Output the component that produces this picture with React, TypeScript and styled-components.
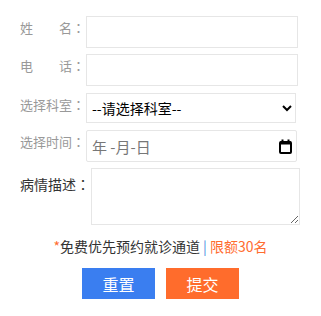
import styled, { createGlobalStyle } from "styled-components";

const GlobalStyle = createGlobalStyle`
	body {
		margin: 0;
		background: #fff;
		font-family: "Noto Sans CJK SC", "Noto Sans", sans-serif;
	}
`;

const Page = styled.form`
	width: 321px;
	padding-top: 16px;
`;

const Row = styled.div<{ $gap?: number }>`
	display: flex;
	align-items: flex-start;
	padding-left: 20px;
	margin-bottom: ${(props) => props.$gap ?? 6}px;
`;

const Label = styled.label`
	display: flex;
	justify-content: space-between;
	width: 65px;
	margin-right: 1px;
	font-size: 13px;
	line-height: 24px;
	color: #999;
	white-space: nowrap;
`;

const DarkLabel = styled.label`
	width: 70px;
	margin-right: 1px;
	font-size: 14px;
	line-height: 32px;
	color: #333;
	white-space: nowrap;
`;

// centred full-width colon, as in the reference font
const Colon = styled.span`
	font-family: "Noto Sans CJK JP", sans-serif;
`;

const TextInput = styled.input`
	box-sizing: border-box;
	width: 212px;
	height: 32px;
	border: 1px solid #e6e6e6;
	border-radius: 0;
	outline: none;
	padding: 0 6px;
	font-family: inherit;
	font-size: 14px;
`;

const Select = styled.select`
	box-sizing: border-box;
	width: 210px;
	height: 30px;
	border: 1px solid #e6e6e6;
	border-radius: 0;
	background: #fff;
	color: #000;
	padding: 0 1px;
	font-family: inherit;
	font-size: 14px;
	outline: none;
`;

const DateBox = styled.div`
	box-sizing: border-box;
	width: 211px;
	height: 32px;
	border: 1px solid #e6e6e6;
	border-radius: 2px;
	display: flex;
	align-items: center;
	justify-content: space-between;
	padding: 0 4px 0 5px;
	font-size: 15px;
	color: #777;
`;

const TextArea = styled.textarea`
	box-sizing: border-box;
	width: 209px;
	height: 57px;
	border: 1px solid #e6e6e6;
	border-radius: 0;
	outline: none;
	font-family: inherit;
	font-size: 14px;
`;

const Notice = styled.p`
	margin: 11px 0 0;
	text-align: center;
	font-size: 14px;
	line-height: 20px;
	color: #333;
`;

const Accent = styled.span<{ $color: string }>`
	color: ${(props) => props.$color};
`;

const Buttons = styled.div`
	display: flex;
	justify-content: center;
	gap: 11px;
	margin-top: 12px;
`;

const Button = styled.button<{ $bg: string }>`
	width: 73px;
	height: 31px;
	border: none;
	border-radius: 0;
	background: ${(props) => props.$bg};
	color: #fff;
	font-family: inherit;
	font-size: 16px;
	padding: 0;
	cursor: pointer;
`;

const FieldLabel = ({ text }: { text: string }) => {
	const parts = text.split(" ");
	return (
		<Label>
			{parts.map((part, i) => (
				<span key={i}>
					{part}
					{i === parts.length - 1 && <Colon>：</Colon>}
				</span>
			))}
		</Label>
	);
};

const CalendarIcon = () => (
	<svg width="13" height="15" viewBox="0 0 13 15">
		<rect x="1" y="3" width="11" height="11" rx="1" fill="none" stroke="#000" strokeWidth="2" />
		<rect x="1" y="2.5" width="11" height="3" fill="#000" />
		<rect x="2.5" y="0.5" width="2" height="3" fill="#000" />
		<rect x="8.5" y="0.5" width="2" height="3" fill="#000" />
	</svg>
);

const App = () => {
	return (
		<Page onSubmit={(e) => e.preventDefault()}>
			<GlobalStyle />
			<Row>
				<FieldLabel text="姓 名" />
				<TextInput type="text" />
			</Row>
			<Row $gap={7}>
				<FieldLabel text="电 话" />
				<TextInput type="tel" />
			</Row>
			<Row $gap={7}>
				<FieldLabel text="选择科室" />
				<Select defaultValue="">
					<option value="">--请选择科室--</option>
				</Select>
			</Row>
			<Row $gap={6}>
				<FieldLabel text="选择时间" />
				<DateBox>
					<span>年 -月-日</span>
					<CalendarIcon />
				</DateBox>
			</Row>
			<Row $gap={0}>
				<DarkLabel>
					病情描述<Colon>：</Colon>
				</DarkLabel>
				<TextArea />
			</Row>
			<Notice>
				<Accent $color="#ff6c2f">*</Accent>免费优先预约就诊通道 <Accent $color="#4a8fe0">|</Accent>{" "}
				<Accent $color="#ff6c2f">限额30名</Accent>
			</Notice>
			<Buttons>
				<Button type="reset" $bg="#3a7ef0">重置</Button>
				<Button type="submit" $bg="#ff6c2c">提交</Button>
			</Buttons>
		</Page>
	);
};

export default App;
